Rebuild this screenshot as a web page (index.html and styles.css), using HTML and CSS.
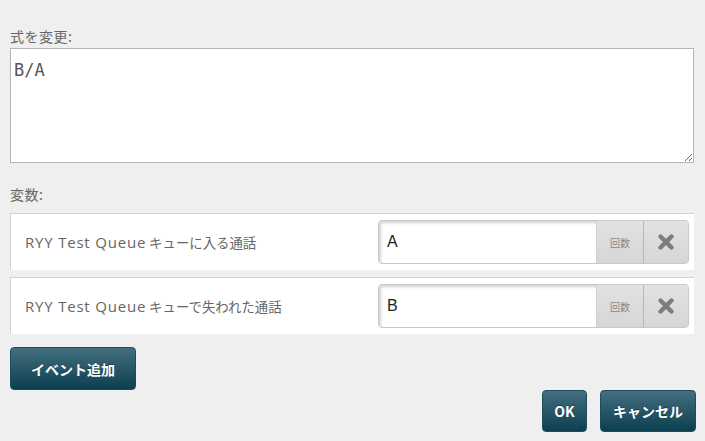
FILE: index.html
```html
<!DOCTYPE html>
<html lang="ja">
<head>
<meta charset="utf-8">
<link rel="stylesheet" href="styles.css">
</head>
<body>
<div class="dialog">
  <label class="label label-first">式を変更:</label>
  <textarea class="formula">B/A</textarea>
  <label class="label label-vars">変数:</label>
  <div class="vars">
    <div class="var-row">
      <span class="var-name"><span class="latin">RYY Test Queue</span> キューに入る通話</span>
      <div class="input-group">
        <input class="var-input" type="text" value="A">
        <span class="addon">回数</span>
        <button class="remove" type="button">
          <svg width="18" height="18" viewBox="0 0 18 18"><path d="M3.5 3.5 L14.5 14.5 M14.5 3.5 L3.5 14.5" stroke="#7c7c7c" stroke-width="4.4" stroke-linecap="round"/></svg>
        </button>
      </div>
    </div>
    <div class="var-row">
      <span class="var-name"><span class="latin">RYY Test Queue</span> キューで失われた通話</span>
      <div class="input-group">
        <input class="var-input" type="text" value="B">
        <span class="addon">回数</span>
        <button class="remove" type="button">
          <svg width="18" height="18" viewBox="0 0 18 18"><path d="M3.5 3.5 L14.5 14.5 M14.5 3.5 L3.5 14.5" stroke="#7c7c7c" stroke-width="4.4" stroke-linecap="round"/></svg>
        </button>
      </div>
    </div>
  </div>
  <div class="add-row">
    <button class="btn btn-add" type="button">イベント追加</button>
  </div>
  <div class="footer">
    <button class="btn btn-ok" type="button">OK</button>
    <button class="btn btn-cancel" type="button">キャンセル</button>
  </div>
</div>
</body>
</html>
```

FILE: styles.css
```css
html, body {
  margin: 0;
  padding: 0;
  background: #efefef;
}
body {
  font-family: "Open Sans", "Noto Sans CJK JP", sans-serif;
  color: #666;
}
.dialog {
  display: flex;
  flex-direction: column;
  padding: 27px 11px 0 10px;
}
.label {
  display: block;
  font-family: "Noto Sans CJK JP", sans-serif;
  font-size: 14px;
  line-height: 18px;
  height: 18px;
  color: #666;
  letter-spacing: 0.5px;
}
.label-first {
  margin-bottom: 3px;
}
.formula {
  box-sizing: border-box;
  width: 684px;
  height: 115px;
  margin: 0;
  border: 1px solid #b4b4b4;
  background: #fff;
  padding: 9px 3px;
  font-family: "DejaVu Sans Mono", monospace;
  font-size: 17px;
  line-height: 24px;
  color: #555;
  resize: both;
  outline: none;
}
.label-vars {
  margin-top: 22px;
  margin-bottom: 10px;
}
.vars {
  display: flex;
  flex-direction: column;
  gap: 7px;
}
.var-row {
  display: flex;
  align-items: center;
  justify-content: space-between;
  background: #fff;
  border-top: 1px solid #d2d2d2;
  border-left: 1px solid #d2d2d2;
  padding: 6px 5px 6px 14px;
  width: 684px;
  box-sizing: border-box;
}
.var-name {
  font-family: "Noto Sans CJK JP", sans-serif;
  font-size: 13.4px;
  color: #666;
}
.latin {
  font-family: "Open Sans", sans-serif;
  font-size: 15px;
  letter-spacing: 0.8px;
}
.input-group {
  display: flex;
  height: 44px;
  border: 1px solid #c8c8c8;
  border-radius: 4px;
  overflow: hidden;
  box-sizing: border-box;
}
.var-input {
  box-sizing: border-box;
  width: 217px;
  height: 100%;
  margin: 0;
  border: none;
  padding: 0 8px;
  font-family: "Liberation Sans", Arial, sans-serif;
  font-size: 16px;
  color: #222;
  background: #fff;
  box-shadow: inset 2px 2px 3px rgba(0, 0, 0, 0.18);
  outline: none;
}
.addon {
  display: flex;
  align-items: center;
  justify-content: center;
  width: 47px;
  background: linear-gradient(#e2e2e2, #d6d6d6);
  border-left: 1px solid #cfcfcf;
  font-family: "Noto Sans CJK JP", sans-serif;
  font-size: 10px;
  color: #8a8a8a;
  box-sizing: border-box;
}
.remove {
  display: flex;
  align-items: center;
  justify-content: center;
  width: 45px;
  margin: 0;
  padding: 0;
  border: none;
  border-left: 1px solid #b8b8b8;
  background: linear-gradient(#e2e2e2, #d6d6d6);
  box-sizing: border-box;
}
.add-row {
  display: flex;
  margin-top: 13px;
}
.btn {
  box-sizing: border-box;
  height: 43px;
  margin: 0;
  padding: 0 11px;
  border: 1px solid #1f4c5c;
  border-radius: 4px;
  background: linear-gradient(#436f7f, #0c3f50);
  color: #fff;
  font-family: "Noto Sans CJK JP", sans-serif;
  font-weight: bold;
  font-size: 14px;
  text-shadow: 0 -1px 0 rgba(0, 0, 0, 0.3);
}
.btn-add {
  width: 126px;
  padding: 0 20px;
}
.footer {
  display: flex;
  justify-content: flex-end;
  gap: 13px;
  margin-right: -2px;
}
.btn-ok {
  width: 45px;
  height: 42px;
}
.btn-cancel {
  width: 96px;
  height: 42px;
}
```
